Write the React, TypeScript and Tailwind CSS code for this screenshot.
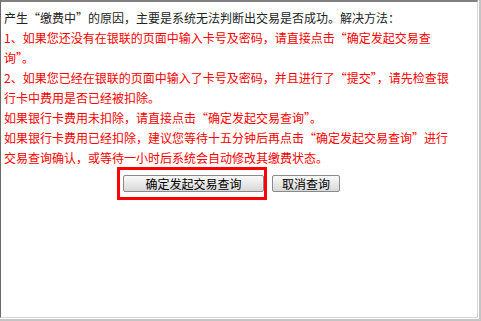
import React from "react";

const red = "text-[#ff0000]";

export default function App() {
  return (
    <div
      lang="zh-CN"
      className="w-[481px] h-[321px] bg-white border-r-2 border-b-2 border-[#c4c4c4] pr-px pb-px box-border"
      style={{ fontFamily: '"Noto Sans CJK SC", "Noto Sans", sans-serif' }}
    >
      <div className="w-full h-full box-border border-t-2 border-l border-t-[#808080] border-l-[#6a6a6a] border-r border-b border-r-[#d4d4d4] border-b-[#d4d4d4] pl-[3px] pt-[6px]">
        <div className="text-[12px] leading-[20px] whitespace-nowrap">
          <div className="text-[#222222]">
            产生“缴费中”的原因，主要是系统无法判断出交易是否成功。解决方法：
          </div>
          <div className={red}>
            1、如果您还没有在银联的页面中输入卡号及密码，请直接点击“确定发起交易查
            <br />
            询”。
          </div>
          <div className={red}>
            2、如果您已经在银联的页面中输入了卡号及密码，并且进行了“提交”，请先检查银
            <br />
            行卡中费用是否已经被扣除。
          </div>
          <div className={red}>如果银行卡费用未扣除，请直接点击“确定发起交易查询”。</div>
          <div className={red}>
            如果银行卡费用已经扣除，建议您等待十五分钟后再点击“确定发起交易查询”进行
            <br />
            交易查询确认，或等待一小时后系统会自动修改其缴费状态。
          </div>
        </div>
        <div className="relative flex items-center gap-[8px] ml-[119px] mt-[7px]">
          <button className="w-[141px] h-[17px] rounded-[2px] border border-[#8a8a8a] bg-gradient-to-b from-[#fafafa] to-[#d8d8d8] text-[12px] leading-[15px] text-black">
            确定发起交易查询
          </button>
          <button className="w-[68px] h-[17px] rounded-[2px] border border-[#8a8a8a] bg-gradient-to-b from-[#fafafa] to-[#d8d8d8] text-[12px] leading-[15px] text-black">
            取消查询
          </button>
          <div className="absolute left-[-6px] top-[-8px] w-[150px] h-[33px] border-[3px] border-[#ff0000] pointer-events-none" />
        </div>
      </div>
    </div>
  );
}
